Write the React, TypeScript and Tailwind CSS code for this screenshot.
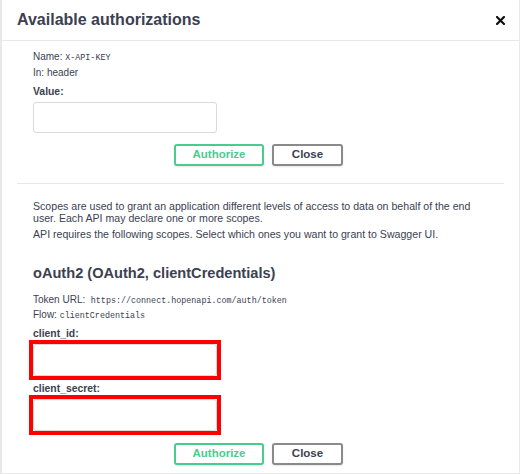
import { useState } from 'react';

const sans = "font-['Liberation_Sans',Arial,sans-serif]";
const mono = "font-['Liberation_Mono','Courier_New',monospace]";

function AuthButtons() {
  return (
    <div className="flex justify-center gap-2 pr-1">
      <button className="box-border flex h-[22px] w-[90px] items-center justify-center rounded-[3px] border-2 border-[#49cc90] bg-white text-[11.5px] font-bold text-[#49cc90] shadow-[0_1px_2px_rgba(0,0,0,0.1)]">
        Authorize
      </button>
      <button className="box-border flex h-[22px] w-[71px] items-center justify-center rounded-[3px] border-2 border-[#8a8a8a] bg-white text-[11.5px] font-bold text-[#3b4151] shadow-[0_1px_2px_rgba(0,0,0,0.1)]">
        Close
      </button>
    </div>
  );
}

function TextInput({ value, onChange }: { value: string; onChange: (v: string) => void }) {
  return (
    <input
      type="text"
      value={value}
      onChange={(e) => onChange(e.target.value)}
      className="box-border block h-[32px] w-[184px] rounded-[3px] border border-[#d9d9d9] bg-white px-2 text-[11px] outline-none"
    />
  );
}

export default function App() {
  const [apiKey, setApiKey] = useState('');
  const [clientId, setClientId] = useState('');
  const [clientSecret, setClientSecret] = useState('');

  return (
    <div className={`${sans} box-border flex h-[474px] w-[520px] flex-col overflow-hidden border-l-2 border-r border-b border-[#e8e8e8] bg-white text-[#3b4151]`}>
      <div className="box-border flex h-[41px] shrink-0 items-center justify-between border-b border-[#e8e8e8] pl-[15px] pr-[14px]">
        <h3 className="text-[16px] font-bold leading-none text-[#3b4151]">Available authorizations</h3>
        <button className="flex h-[10px] w-[10px] items-center justify-center">
          <svg width="9" height="9" viewBox="0 0 9 9">
            <path d="M1 1 L8 8 M8 1 L1 8" stroke="#111" strokeWidth="2.2" strokeLinecap="square" />
          </svg>
        </button>
      </div>

      <div className="mx-[15px] box-border border-b border-[#e8e8e8] px-4 pt-[8px] pb-[17px]">
        <div className="text-[10px] leading-[16px]">
          Name: <code className={`${mono} text-[8.4px] leading-none`}>X-API-KEY</code>
        </div>
        <div className="text-[10px] leading-[16px]">In: header</div>
        <label className="mt-[3px] block text-[10.4px] font-bold leading-[16px]">Value:</label>
        <div className="mt-[2px]">
          <input
            type="text"
            value={apiKey}
            onChange={(e) => setApiKey(e.target.value)}
            className="box-border block h-[31px] w-[184px] rounded-[3px] border border-[#d9d9d9] bg-white px-2 text-[11px] outline-none"
          />
        </div>
        <div className="mt-[11px]">
          <AuthButtons />
        </div>
      </div>

      <div className="mx-[15px] px-4 pt-[16px]">
        <p className="text-[10.6px] leading-[12px]">
          Scopes are used to grant an application different levels of access to data on behalf of the end user. Each API may declare one or more scopes.
        </p>
        <p className="mt-[4px] text-[10.6px] leading-[12px]">
          API requires the following scopes. Select which ones you want to grant to Swagger UI.
        </p>
        <h4 className="mt-[23px] text-[14.6px] font-bold leading-[20px]">oAuth2 (OAuth2, clientCredentials)</h4>
        <div className="mt-[9px] text-[10px] leading-[15px]">
          Token URL:&nbsp; <code className={`${mono} text-[8.4px] leading-none`}>https://connect.hopenapi.com/auth/token</code>
        </div>
        <div className="text-[10px] leading-[15px]">
          Flow: <code className={`${mono} text-[8.4px] leading-none`}>clientCredentials</code>
        </div>

        <label className="mt-[6px] block text-[10.4px] font-bold leading-[12px]">client_id:</label>
        <div className="-ml-1 w-fit border-4 border-[#ff0000]">
          <TextInput value={clientId} onChange={setClientId} />
        </div>
        <label className="mt-[3px] block text-[10.4px] font-bold leading-[12px]">client_secret:</label>
        <div className="-ml-1 w-fit border-4 border-[#ff0000]">
          <TextInput value={clientSecret} onChange={setClientSecret} />
        </div>
        <div className="mt-[8px]">
          <AuthButtons />
        </div>
      </div>
    </div>
  );
}
